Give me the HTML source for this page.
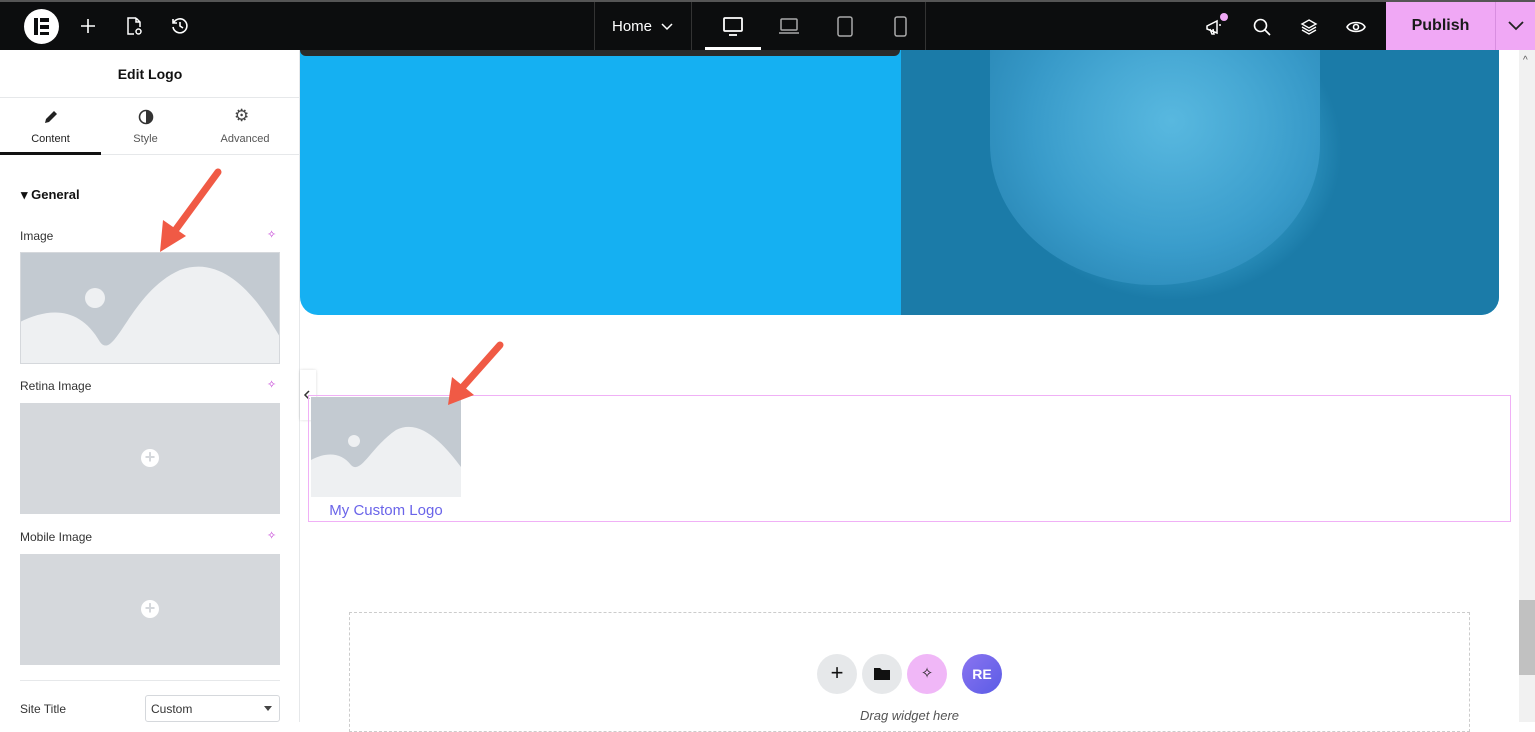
<!DOCTYPE html>
<html><head><meta charset="utf-8"><style>
*{box-sizing:border-box;margin:0;padding:0}
body{width:1535px;height:722px;overflow:hidden;background:#fff;font-family:"Liberation Sans",sans-serif;position:relative}
.abs{position:absolute}
.top{left:0;top:0;width:1535px;height:50px;background:#0c0d0e;border-top:2px solid #555}
.panel{left:0;top:50px;width:300px;height:672px;background:#fff;border-right:1px solid #e6e8ea}
.lbl{font-size:12px;color:#333}
.ph{background:#d5d8dc}
.plus{width:18px;height:18px;border-radius:50%;background:#fff;color:#d5d8dc;font-size:18px;line-height:17px;text-align:center;font-weight:bold}
</style></head><body>
<div class="abs top">
  <div class="abs" style="left:24px;top:7px;width:35px;height:35px;border-radius:50%;background:#fff"></div>
  <div class="abs" style="left:34px;top:16px;width:4px;height:17px;background:#0c0d0e"></div>
  <div class="abs" style="left:40px;top:16px;width:9px;height:3.5px;background:#0c0d0e"></div>
  <div class="abs" style="left:40px;top:23px;width:9px;height:3.5px;background:#0c0d0e"></div>
  <div class="abs" style="left:40px;top:29.5px;width:9px;height:3.5px;background:#0c0d0e"></div>
  <svg class="abs" style="left:78px;top:14px" width="20" height="20" stroke="#fff" stroke-width="1.6" fill="none"><path d="M10 3v14M3 10h14"/></svg>
  <svg class="abs" style="left:123px;top:13px" width="22" height="22" stroke="#fff" stroke-width="1.5" fill="none"><path d="M13 3H5v16h6M13 3l4 4v5M13 3v4h4"/><circle cx="15.5" cy="16.5" r="2.5"/></svg>
  <svg class="abs" style="left:170px;top:14px" width="20" height="20" stroke="#fff" stroke-width="1.6" fill="none"><path d="M3.5 7A7 7 0 1 1 3 11M3 3v4h4M10 6v4l3 2"/></svg>
  <div class="abs" style="left:594px;top:0;width:1px;height:48px;background:#333"></div>
  <div class="abs" style="left:612px;top:16px;color:#fff;font-size:15px">Home</div>
  <svg class="abs" style="left:660px;top:19px" width="14" height="10" stroke="#fff" stroke-width="1.5" fill="none"><path d="M2 3l5 5 5-5"/></svg>
  <div class="abs" style="left:691px;top:0;width:1px;height:48px;background:#333"></div>
  <svg class="abs" style="left:721px;top:13px" width="24" height="22" stroke="#fff" stroke-width="1.8" fill="none"><rect x="3" y="3" width="18" height="13" rx="1"/><path d="M8 20h8"/></svg>
  <div class="abs" style="left:705px;top:45px;width:56px;height:3px;background:#fff"></div>
  <svg class="abs" style="left:777px;top:13px" width="24" height="22" stroke="#aaa" stroke-width="1.5" fill="none"><rect x="4" y="4" width="16" height="11" rx="1"/><path d="M2 18h20"/></svg>
  <svg class="abs" style="left:834px;top:12px" width="22" height="24" stroke="#aaa" stroke-width="1.5" fill="none"><rect x="4" y="3" width="14" height="19" rx="2"/></svg>
  <svg class="abs" style="left:890px;top:12px" width="22" height="24" stroke="#aaa" stroke-width="1.5" fill="none"><rect x="5" y="3" width="11" height="19" rx="2"/></svg>
  <div class="abs" style="left:925px;top:0;width:1px;height:48px;background:#333"></div>
  <svg class="abs" style="left:1203px;top:13px" width="24" height="24" stroke="#fff" stroke-width="1.5" fill="none"><path d="M4 11l10-5v12L4 14zM7 14l2 5h2l-1-5M16 10h2"/></svg>
  <div class="abs" style="left:1220px;top:11px;width:8px;height:8px;border-radius:50%;background:#f0a8f5"></div>
  <svg class="abs" style="left:1252px;top:15px" width="20" height="20" stroke="#fff" stroke-width="1.6" fill="none"><circle cx="8.5" cy="8.5" r="6"/><path d="M13 13l5 5"/></svg>
  <svg class="abs" style="left:1299px;top:15px" width="20" height="20" stroke="#fff" stroke-width="1.4" fill="none"><path d="M10 3l7 4-7 4-7-4zM3 10l7 4 7-4M3 13l7 4 7-4"/></svg>
  <svg class="abs" style="left:1345px;top:15px" width="22" height="20" stroke="#fff" stroke-width="1.6" fill="none"><path d="M2 10c3-6 15-6 18 0-3 6-15 6-18 0z"/><circle cx="11" cy="10" r="2.5"/></svg>
  <div class="abs" style="left:1386px;top:0;width:109px;height:48px;background:#f0a8f5;color:#1a1a1a;font-weight:bold;font-size:16px;line-height:48px;text-align:center">Publish</div>
  <div class="abs" style="left:1495px;top:0;width:40px;height:48px;background:#f0a8f5;border-left:1px solid #d88ee0"></div>
  <svg class="abs" style="left:1507px;top:18px" width="18" height="12" stroke="#222" stroke-width="1.8" fill="none"><path d="M2 2l7 7 7-7"/></svg>
</div>

<div class="abs panel">
  <div class="abs" style="left:0;top:16px;width:300px;text-align:center;font-weight:bold;font-size:14px;color:#111">Edit Logo</div>
  <div class="abs" style="left:0;top:47px;width:300px;height:1px;background:#e6e8ea"></div>
  <svg class="abs" style="left:43px;top:59px" width="16" height="16" fill="#222"><path d="M2 14l1-4 8-8 3 3-8 8z"/></svg>
  <div class="abs" style="left:0;top:83px;width:101px;text-align:center;font-size:11px;color:#222">Content</div>
  <svg class="abs" style="left:138px;top:59px" width="16" height="16"><circle cx="8" cy="8" r="6.5" fill="none" stroke="#333" stroke-width="1.6"/><path d="M8 1.5a6.5 6.5 0 0 1 0 13z" fill="#333"/></svg>
  <div class="abs" style="left:95px;top:83px;width:101px;text-align:center;font-size:11px;color:#555">Style</div>
  <div class="abs" style="left:234px;top:56px;font-size:17px;color:#444">⚙</div>
  <div class="abs" style="left:195px;top:83px;width:100px;text-align:center;font-size:11px;color:#555">Advanced</div>
  <div class="abs" style="left:0;top:102px;width:101px;height:3px;background:#111"></div>
  <div class="abs" style="left:101px;top:104px;width:199px;height:1px;background:#e6e8ea"></div>
  <div class="abs" style="left:21px;top:137px;font-weight:bold;font-size:13px;color:#111">▾ General</div>
  <div class="abs lbl" style="left:20px;top:179px">Image</div>
  <div class="abs" style="left:267px;top:178px;color:#c33bd6;font-size:11px">✧</div>
  <svg class="abs" style="left:20px;top:202px" width="260" height="112"><rect width="260" height="112" fill="#c3cad1"/><circle cx="75" cy="46" r="10" fill="#eef0f2"/><path d="M0 70 C30 55 60 55 80 90 C95 110 110 40 160 18 C210 0 245 60 260 85 V112 H0 Z" fill="#eef0f2"/><rect x=".5" y=".5" width="259" height="111" fill="none" stroke="#d5d8dc"/></svg>
  <div class="abs lbl" style="left:20px;top:329px">Retina Image</div>
  <div class="abs" style="left:267px;top:328px;color:#c33bd6;font-size:11px">✧</div>
  <div class="abs ph" style="left:20px;top:353px;width:260px;height:111px"></div>
  <div class="abs plus" style="left:141px;top:399px">+</div>
  <div class="abs lbl" style="left:20px;top:480px">Mobile Image</div>
  <div class="abs" style="left:267px;top:479px;color:#c33bd6;font-size:11px">✧</div>
  <div class="abs ph" style="left:20px;top:504px;width:260px;height:111px"></div>
  <div class="abs plus" style="left:141px;top:550px">+</div>
  <div class="abs" style="left:20px;top:630px;width:260px;height:1px;background:#e6e8ea"></div>
  <div class="abs lbl" style="left:20px;top:652px">Site Title</div>
  <div class="abs" style="left:145px;top:645px;width:135px;height:27px;border:1px solid #d5d8dc;border-radius:3px;font-size:12px;color:#333;padding:6px 5px">Custom</div>
  <div class="abs" style="left:264px;top:656px;border-left:4px solid transparent;border-right:4px solid transparent;border-top:5px solid #444"></div>
</div>

<!-- canvas -->
<div class="abs" style="left:300px;top:50px;width:1199px;height:265px;background:#15b0f2;border-radius:0 0 18px 18px;overflow:hidden">
  <div class="abs" style="left:0;top:0;width:600px;height:6px;background:#2a2a2a;border-radius:0 0 8px 8px"></div>
  <div class="abs" style="left:601px;top:0;width:598px;height:265px;background:radial-gradient(ellipse 170px 150px at 270px 100px,#4db3dc 0%,#3aa3cf 60%,#1b7ba8 100%),#1e7faa;border-radius:0 0 14px 0"></div>
  <div class="abs" style="left:690px;top:0;width:330px;height:235px;border-radius:0 0 50% 50%/0 0 60% 60%;background:radial-gradient(ellipse at 55% 30%,#5ab9e0,#3a9ccb 55%,#237fad);opacity:.9"></div>
</div>
<div class="abs" style="left:1519px;top:50px;width:16px;height:672px;background:#f1f1f1"></div>
<div class="abs" style="left:1523px;top:55px;font-size:10px;color:#555">^</div>
<div class="abs" style="left:1519px;top:600px;width:16px;height:75px;background:#c1c1c1"></div>

<div class="abs" style="left:300px;top:370px;width:16px;height:50px;background:#fff;box-shadow:0 0 3px rgba(0,0,0,.15)"></div>
<svg class="abs" style="left:302px;top:389px" width="10" height="12" stroke="#333" stroke-width="1.5" fill="none"><path d="M7 2L3 6l4 4"/></svg>
<div class="abs" style="left:308px;top:395px;width:1203px;height:127px;border:1.5px solid #f0b0f6"></div>
<svg class="abs" style="left:311px;top:397px" width="150" height="100"><rect width="150" height="100" fill="#c3cad1"/><circle cx="43" cy="44" r="6" fill="#eef0f2"/><path d="M0 63 C15 55 30 55 40 68 C50 78 60 50 85 33 C110 20 135 50 150 70 V100 H0Z" fill="#eef0f2"/></svg>
<div class="abs" style="left:311px;top:502px;width:150px;text-align:center;color:#6a64e9;font-size:15px">My Custom Logo</div>

<div class="abs" style="left:349px;top:612px;width:1121px;height:120px;border:1.5px dashed #ccc"></div>
<div class="abs" style="left:817px;top:654px;width:40px;height:40px;border-radius:50%;background:#e6e8ea;font-size:22px;text-align:center;line-height:38px;color:#111">+</div>
<div class="abs" style="left:862px;top:654px;width:40px;height:40px;border-radius:50%;background:#e6e8ea"></div>
<svg class="abs" style="left:874px;top:666px" width="16" height="14"><path d="M0 2h6l2 2h8v10H0z" fill="#111"/></svg>
<div class="abs" style="left:907px;top:654px;width:40px;height:40px;border-radius:50%;background:#f0b7f7;text-align:center;line-height:40px;font-size:15px;color:#222">✧</div>
<div class="abs" style="left:962px;top:654px;width:40px;height:40px;border-radius:50%;background:linear-gradient(135deg,#8a74f0,#5b5ce6);color:#fff;font-weight:bold;font-size:14px;text-align:center;line-height:40px">RE</div>
<div class="abs" style="left:349px;top:708px;width:1121px;text-align:center;font-style:italic;font-size:13px;color:#555">Drag widget here</div>

<!-- arrows -->
<svg class="abs" style="left:150px;top:160px" width="80" height="100"><path d="M68 12L24 72" stroke="#f05a45" stroke-width="7" stroke-linecap="round"/><path d="M10 92L13 60 36 76z" fill="#f05a45"/></svg>
<svg class="abs" style="left:440px;top:335px" width="70" height="75"><path d="M60 10L20 55" stroke="#f05a45" stroke-width="7" stroke-linecap="round"/><path d="M8 70L12 42 34 60z" fill="#f05a45"/></svg>
</body></html>
